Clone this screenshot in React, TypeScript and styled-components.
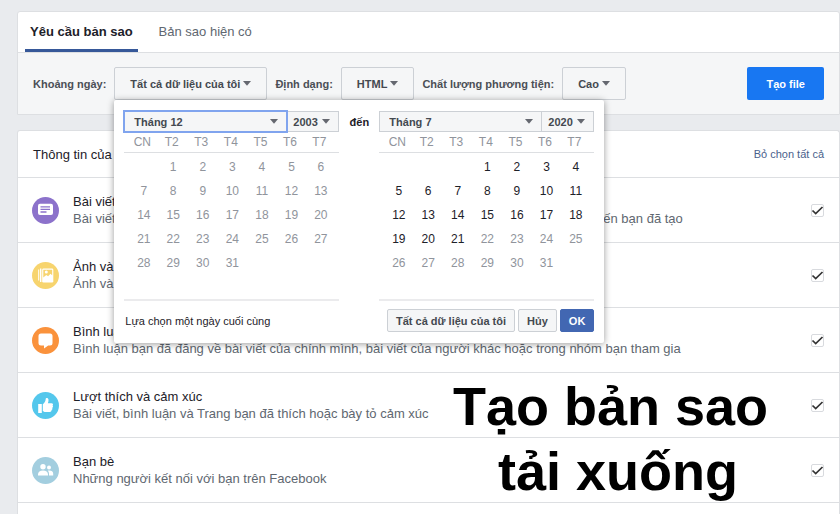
import React, { useState } from "react";
import styled, { createGlobalStyle } from "styled-components";

const GlobalStyle = createGlobalStyle`
  *, *::before, *::after { box-sizing: border-box; }
  body { margin: 0; background: #e9ebee; }
  body, button, select, input { font-family: "Liberation Sans", Arial, sans-serif; }
`;

const Page = styled.main`
  position: relative;
  display: flex;
  flex-direction: column;
  gap: 15px;
  height: 100vh;
  min-height: 514px;
  overflow: hidden;
  padding: 11px 0 0 17px;
  color: #1d2129;
`;

const Card = styled.section<{ $fill?: boolean }>`
  flex: ${(p) => (p.$fill ? "1" : "none")};
  background: #fff;
  border: 1px solid #dddfe2;
  border-bottom-width: ${(p) => (p.$fill ? "0" : "1px")};
  border-radius: 3px 3px 0 0;
`;

const Tabs = styled.nav`
  display: flex;
  gap: 16px;
  height: 41px;
  padding: 0 7px;
  border-bottom: 1px solid #dddfe2;
`;

const Tab = styled.a<{ $active?: boolean }>`
  display: flex;
  align-items: center;
  height: 40px;
  padding: 2px 5px 0;
  border-bottom: 3px solid ${(p) => (p.$active ? "#365899" : "transparent")};
  color: ${(p) => (p.$active ? "#1d2129" : "#606770")};
  font-size: 13px;
  font-weight: ${(p) => (p.$active ? "bold" : "normal")};
  text-decoration: none;
  white-space: nowrap;
`;

const Filters = styled.div`
  display: flex;
  align-items: center;
  gap: 8px;
  padding: 14px 15px;
  background: #f5f6f7;
`;

const FilterLabel = styled.span`
  color: #4b4f56;
  font-size: 11px;
  font-weight: bold;
  white-space: nowrap;
`;

const Anchor = styled.div`
  position: relative;
`;

const FilterButton = styled.button`
  display: flex;
  align-items: center;
  gap: 3px;
  height: 33px;
  padding: 0 15px;
  background: #f5f6f7;
  border: 1px solid #ccd0d5;
  border-radius: 2px;
  color: #444950;
  font-size: 11px;
  font-weight: bold;
  white-space: nowrap;
`;

const PrimaryButton = styled.button`
  height: 33px;
  margin-left: auto;
  padding: 0 19px;
  background: #1877f2;
  border: 0;
  border-radius: 2px;
  color: #fff;
  font-size: 11px;
  font-weight: bold;
  white-space: nowrap;
`;

const Popover = styled.div`
  position: absolute;
  z-index: 2;
  top: 100%;
  left: 0;
  width: 490px;
  padding: 11px 10px 11px 10px;
  background: #fff;
  border-radius: 2px;
  box-shadow: 0 1px 7px rgba(0, 0, 0, 0.4);
`;

const Range = styled.div`
  display: flex;
  justify-content: space-between;
`;

const RangeWord = styled.span`
  padding-top: 4px;
  color: #1d2129;
  font-size: 11px;
  font-weight: bold;
  line-height: 14px;
`;

const CalendarBox = styled.div`
  width: 215px;
  height: 190px;
  border-bottom: 2px solid #ebebed;
`;

const Pickers = styled.div`
  display: grid;
  grid-template-columns: 1fr 52px;
`;

const PickerBox = styled.label<{ $focused?: boolean }>`
  display: grid;
  align-items: center;
  height: 21px;
  background: #f5f6f7;
  border: 1px solid #ccd0d5;
  outline: ${(p) => (p.$focused ? "2px solid #80a4ee" : "none")};
  outline-offset: -1px;
  z-index: ${(p) => (p.$focused ? "1" : "0")};

  & + & { margin-left: -1px; }
  & > * { grid-area: 1 / 1; }
  & > svg { justify-self: end; margin-right: 8px; pointer-events: none; }
`;

const Picker = styled.select<{ $inset?: boolean }>`
  appearance: none;
  width: 100%;
  height: 19px;
  padding: 0 0 0 ${(p) => (p.$inset ? "9px" : "6px")};
  background: transparent;
  border: 0;
  outline: 0;
  color: #444950;
  font-size: 11px;
  font-weight: bold;
`;

const DayTable = styled.table`
  width: 100%;
  border-collapse: collapse;
  table-layout: fixed;

  thead { border-bottom: 1px solid #dddfe2; }
  th {
    height: 20px;
    padding: 1px 3px 0 0;
    color: #90949c;
    font-size: 12px;
    font-weight: normal;
  }
  th:first-child { width: 34px; padding-left: 5px; }
  th:last-child { width: 33px; padding-right: 7px; }
  td { height: 24px; padding: 0; text-align: center; }
  td:first-child { padding-left: 5px; }
  td:last-child { padding-right: 4px; }
  tbody tr:first-child td { height: 27px; padding-top: 3px; }
`;

const Day = styled.button<{ $open: boolean }>`
  height: 20px;
  padding: 0;
  background: none;
  border: 0;
  color: ${(p) => (p.$open ? "#1d2129" : "#90949c")};
  font-size: 12px;
`;

const PopoverFooter = styled.div`
  display: flex;
  align-items: center;
  justify-content: flex-end;
  gap: 3px;
  padding-top: 8px;
`;

const Hint = styled.span`
  margin-right: auto;
  padding-left: 1px;
  font-size: 11px;
`;

const SmallButton = styled.button<{ $primary?: boolean }>`
  height: 23px;
  padding: 0 8px;
  background: ${(p) => (p.$primary ? "#4267b2" : "#f5f6f7")};
  border: 1px solid ${(p) => (p.$primary ? "#4267b2" : "#ccd0d5")};
  border-radius: 2px;
  color: ${(p) => (p.$primary ? "#fff" : "#444950")};
  font-size: 11px;
  font-weight: bold;
`;

const ListHeader = styled.header`
  display: flex;
  align-items: center;
  justify-content: space-between;
  height: 47px;
  padding: 0 15px;
  border-bottom: 1px solid #dddfe2;
`;

const ListTitle = styled.h2`
  margin: 0;
  font-size: 13px;
  font-weight: normal;
`;

const DeselectLink = styled.a`
  color: #4a5f8c;
  font-size: 11px;
  text-decoration: none;
`;

const Row = styled.label`
  display: flex;
  align-items: center;
  height: 65px;
  padding: 0 15px 0 14px;
  border-bottom: 1px solid #dddfe2;
`;

const Disc = styled.span<{ $color: string }>`
  display: flex;
  flex: none;
  width: 27px;
  height: 27px;
  margin-right: 14px;
  background: ${(p) => p.$color};
  border-radius: 50%;
`;

const RowText = styled.span`
  display: flex;
  flex: 1;
  flex-direction: column;
  font-size: 13px;
  line-height: 17px;
  white-space: nowrap;
`;

const RowNote = styled.span`
  color: #606770;
`;

const Tick = styled.span`
  display: grid;
  width: 13px;
  height: 13px;

  & > * { grid-area: 1 / 1; }
  & > svg { pointer-events: none; }
  & > input:not(:checked) + svg { visibility: hidden; }
`;

const TickInput = styled.input`
  appearance: none;
  width: 13px;
  height: 13px;
  margin: 0;
  background: #fff;
  border: 1px solid #d8dade;
  border-radius: 2px;
`;

const Caption = styled.p`
  position: absolute;
  z-index: 3;
  right: 72px;
  bottom: 10px;
  margin: 0;
  color: #000;
  font-size: 54px;
  font-weight: bold;
  line-height: 65px;
  text-align: center;
  white-space: nowrap;
  pointer-events: none;
`;

const Caret = () => (
  <svg width="8" height="5" viewBox="0 0 8 5" aria-hidden="true">
    <path d="M0 0h8L4 4.800z" fill="#656870" />
  </svg>
);

const glyphs: Record<string, React.ReactNode> = {
  posts: (
    <>
      <path d="M8 6.800h11a2 2 0 0 1 2 2V16a2 2 0 0 1-2 2H8a2 2 0 0 1-2-2V8.800a2 2 0 0 1 2-2z" fill="#fff" />
      <path d="M8.500 9.800h9.500M8.500 12.400h9.500M8.500 15h6" stroke="#8c72cb" strokeWidth="1.300" />
    </>
  ),
  photos: (
    <>
      <path d="M6.200 7.500h1v11h-1zM8 6.500h1.400v13.500H8z" fill="#fff" />
      <path d="M11.500 6.500h8.500a1.300 1.300 0 0 1 1.300 1.300v11.400a1.300 1.300 0 0 1-1.300 1.300h-8.500a1.300 1.300 0 0 1-1.300-1.300V7.800a1.300 1.300 0 0 1 1.300-1.300z" fill="#fff" />
      <path d="M11.300 7.700h8.900v5.600l-1.700-1.600-2.400 2.600-1.800-1.300-3 2.500z" fill="#f7d46e" />
      <circle cx="14.300" cy="10" r="1.500" fill="#fff" />
    </>
  ),
  comments: (
    <path d="M9 6.500h9a2.500 2.500 0 0 1 2.500 2.500v7a2.500 2.500 0 0 1-2.500 2.500h-1.800L12 21.500v-3H9A2.500 2.500 0 0 1 6.500 16V9A2.500 2.500 0 0 1 9 6.500z" fill="#fff" />
  ),
  likes: (
    <path d="M6.200 12h3.600v9H6.200zM10.800 12.300c1.700-1.200 2.700-3 2.900-5.300.1-1.500 2.700-1.300 2.800.8.100 1.200-.2 2.300-.6 3.400h3.600c1.600 0 2 1.600 1 2.400.8.700.7 1.800-.3 2.300.5.800.2 1.700-.7 2.100.2 1-.4 1.900-1.700 1.900h-4.300c-1.200 0-1.900-.5-2.700-1z" fill="#fff" />
  ),
  friends: (
    <g fill="#fff">
      <circle cx="11" cy="9.800" r="2.700" />
      <path d="M6 18.500v-1.300c0-2.300 2-3.700 5-3.700s5 1.400 5 3.700v1.300z" />
      <circle cx="17" cy="10.500" r="2" />
      <path d="M17 18.500v-1.700c0-1.300-.5-2.300-1.300-3 3-.7 5.500.5 5.500 3v1.700z" />
    </g>
  ),
};

const items = [
  { id: "posts", color: "#8c72cb", title: "Bài viết", note: "Bài viết bạn đã chia sẻ trên Facebook bài viết bị ẩn khỏi dòng thời gian và cuộc thăm dò ý kiến bạn đã tạo" },
  { id: "photos", color: "#f7d46e", title: "Ảnh và video", note: "Ảnh và video bạn đã tải lên và chia sẻ" },
  { id: "comments", color: "#fa923c", title: "Bình luận", note: "Bình luận bạn đã đăng về bài viết của chính mình, bài viết của người khác hoặc trong nhóm bạn tham gia" },
  { id: "likes", color: "#54c7ec", title: "Lượt thích và cảm xúc", note: "Bài viết, bình luận và Trang bạn đã thích hoặc bày tỏ cảm xúc" },
  { id: "friends", color: "#a3cedf", title: "Bạn bè", note: "Những người kết nối với bạn trên Facebook" },
];

const weekdays = ["CN", "T2", "T3", "T4", "T5", "T6", "T7"];

type CalendarProps = {
  name: string;
  month: string;
  year: string;
  offset: number;
  lastOpen: number;
  focused?: boolean;
};

function Calendar({ name, month, year, offset, lastOpen, focused }: CalendarProps) {
  const weeks = Array.from({ length: 5 }, (_, w) =>
    weekdays.map((_, d) => w * 7 + d - offset + 1)
  );
  return (
    <CalendarBox>
      <Pickers>
        <PickerBox $focused={focused}>
          <Picker $inset aria-label={`Tháng ${name}`}>
            <option>{month}</option>
          </Picker>
          <Caret />
        </PickerBox>
        <PickerBox>
          <Picker aria-label={`Năm ${name}`}>
            <option>{year}</option>
          </Picker>
          <Caret />
        </PickerBox>
      </Pickers>
      <DayTable>
        <thead>
          <tr>
            {weekdays.map((d) => (
              <th key={d} scope="col">{d}</th>
            ))}
          </tr>
        </thead>
        <tbody>
          {weeks.map((week, w) => (
            <tr key={w}>
              {week.map((n, d) => (
                <td key={d}>
                  {n > 0 && n < 32 && <Day type="button" $open={n <= lastOpen}>{n}</Day>}
                </td>
              ))}
            </tr>
          ))}
        </tbody>
      </DayTable>
    </CalendarBox>
  );
}

function ItemRow({ item }: { item: (typeof items)[number] }) {
  const [checked, setChecked] = useState(true);
  return (
    <Row>
      <Disc $color={item.color}>
        <svg width="27" height="27" viewBox="0 0 27 27" aria-hidden="true">{glyphs[item.id]}</svg>
      </Disc>
      <RowText>
        {item.title}
        <RowNote>{item.note}</RowNote>
      </RowText>
      <Tick>
        <TickInput type="checkbox" checked={checked} onChange={() => setChecked(!checked)} />
        <svg width="13" height="13" viewBox="0 0 13 13" aria-hidden="true">
          <path d="M1.500 6.500l3.200 3L11.500 3" fill="none" stroke="#333" strokeWidth="1.700" />
        </svg>
      </Tick>
    </Row>
  );
}

export default function App() {
  return (
    <>
      <GlobalStyle />
      <Page>
        <Card>
          <Tabs>
            <Tab href="#request" $active>Yêu cầu bản sao</Tab>
            <Tab href="#available">Bản sao hiện có</Tab>
          </Tabs>
          <Filters>
            <FilterLabel id="range-label">Khoảng ngày:</FilterLabel>
            <Anchor>
              <FilterButton type="button" aria-describedby="range-label">
                Tất cả dữ liệu của tôi <Caret />
              </FilterButton>
              <Popover>
                <Range>
                  <Calendar name="bắt đầu" month="Tháng 12" year="2003" offset={1} lastOpen={0} focused />
                  <RangeWord>đến</RangeWord>
                  <Calendar name="kết thúc" month="Tháng 7" year="2020" offset={3} lastOpen={21} />
                </Range>
                <PopoverFooter>
                  <Hint>Lựa chọn một ngày cuối cùng</Hint>
                  <SmallButton type="button">Tất cả dữ liệu của tôi</SmallButton>
                  <SmallButton type="button">Hủy</SmallButton>
                  <SmallButton type="button" $primary>OK</SmallButton>
                </PopoverFooter>
              </Popover>
            </Anchor>
            <FilterLabel id="format-label">Định dạng:</FilterLabel>
            <FilterButton type="button" aria-describedby="format-label">
              HTML <Caret />
            </FilterButton>
            <FilterLabel id="quality-label">Chất lượng phương tiện:</FilterLabel>
            <FilterButton type="button" aria-describedby="quality-label">
              Cao <Caret />
            </FilterButton>
            <PrimaryButton type="button">Tạo file</PrimaryButton>
          </Filters>
        </Card>
        <Card $fill>
          <ListHeader>
            <ListTitle>Thông tin của bạn</ListTitle>
            <DeselectLink href="#deselect">Bỏ chọn tất cả</DeselectLink>
          </ListHeader>
          {items.map((item) => (
            <ItemRow key={item.id} item={item} />
          ))}
        </Card>
        <Caption>
          Tạo bản sao
          <br />
          {"\u00a0"}tải xuống
        </Caption>
      </Page>
    </>
  );
}
